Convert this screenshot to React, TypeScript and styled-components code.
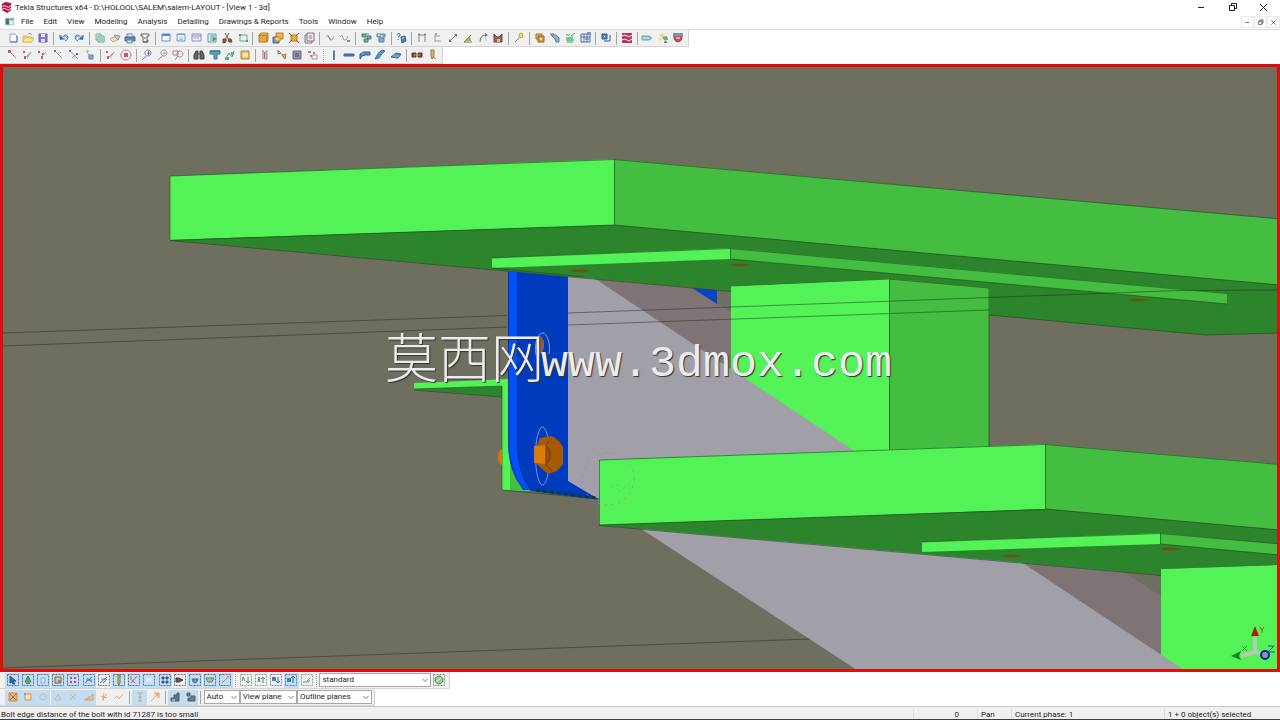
import React from 'react';
import styled, { createGlobalStyle } from 'styled-components';

const GlobalStyle = createGlobalStyle`
  *, *::before, *::after { box-sizing: border-box; }
  body { margin: 0; background: #fff; }
  button, select { font: inherit; color: inherit; margin: 0; padding: 0; border: 0; background: none; }
`;

const Window = styled.div`
  display: flex;
  flex-direction: column;
  min-height: 100vh;
  font: 8px/12px Roboto, "Open Sans", sans-serif;
  color: #1c1c1c;
  background: #fff;
  border-bottom: 1px solid #3c3c3c;
  overflow: hidden;
`;

const TitleBar = styled.header`
  display: flex;
  align-items: center;
  height: 15px;
  gap: 1px;
  padding: 0 2px 0 1px;
`;

const Title = styled.h1`
  flex: 1;
  margin: 0;
  padding-left: 2px;
  font-size: inherit;
  font-weight: 400;
  white-space: nowrap;
`;

const CaptionButton = styled.button`
  display: flex;
  align-items: center;
  justify-content: center;
  width: 30px;
  height: 14px;
`;

const MenuBar = styled.nav`
  display: flex;
  align-items: center;
  height: 15px;
  padding-left: 5px;
  border-bottom: 1px solid #dcdcdc;
`;

const MenuList = styled.ul`
  display: flex;
  flex: 1;
  gap: 10px;
  margin: 0;
  padding: 0 0 0 6px;
  list-style: none;
`;

const MenuItem = styled.button`
  display: block;
  white-space: nowrap;
`;

const ChildButton = styled.button`
  display: flex;
  align-items: center;
  justify-content: center;
  width: 13px;
  height: 12px;
  border: 1px solid #ececec;
`;

const ToolRow = styled.div`
  display: flex;
  height: 17px;
`;

const Toolbar = styled.div<{ $width: number }>`
  display: flex;
  align-items: center;
  justify-content: space-between;
  width: ${(p) => p.$width}px;
  padding: 0 2px 0 5px;
  background: #f0f0f0;
  border: 1px solid #d4d4d4;
  border-width: 0 1px 1px 0;
`;

const ToolButton = styled.button<{ $on?: boolean }>`
  display: flex;
  align-items: center;
  justify-content: center;
  width: 15px;
  height: 15px;
  background: ${(p) => (p.$on ? '#c3ddf2' : 'transparent')};

  svg { opacity: 0.85; }
`;

const Divider = styled.span<{ $dotted?: boolean }>`
  width: 1px;
  height: 13px;
  margin: 0 2px;
  border-left: 1px ${(p) => (p.$dotted ? 'dotted #b0b0b0' : 'solid #a4a4a4')};
`;

const Viewport = styled.main`
  position: relative;
  flex: 1;
  display: flex;
  min-height: 300px;
  border: 3px solid #e00d0d;
  background: #6e6f5f;
  overflow: hidden;
`;

const Scene = styled.svg`
  flex: 1;
  width: 100%;
  min-width: 0;
  display: block;
`;

const Watermark = styled.g`
  fill: #ececec;
  text-shadow: 1px 1px 1px #333;
`;

const Combo = styled.label<{ $width: number }>`
  position: relative;
  display: block;
  width: ${(p) => p.$width}px;
  height: 14px;
  border: 1px solid #a8a8a8;
  background: #fff;

  select {
    display: block;
    width: 100%;
    height: 12px;
    padding-left: 2px;
    line-height: 12px;
    appearance: none;
  }

  svg {
    position: absolute;
    top: 4px;
    right: 2px;
    pointer-events: none;
  }
`;

const StatusBar = styled.footer`
  display: grid;
  grid-template-columns: 1fr 64px 34px 153px 116px;
  height: 13px;
  padding-top: 2px;
  background: #f0f0f0;
  border-top: 1px solid #c8c8c8;
`;

const StatusCell = styled.span<{ $right?: boolean }>`
  padding: 0 ${(p) => (p.$right ? 18 : 0)}px 0 3px;
  text-align: ${(p) => (p.$right ? 'right' : 'left')};
  border-left: 1px solid #dcdcdc;
  white-space: nowrap;

  &:first-child { padding-left: 1px; border-left: 0; }
`;

/* Each icon is a list of strokes on a 12 x 12 grid: path, fill, stroke. */
type Part = [string, string, string?];

const N = 'none';
const dashBox: Part = ['M.5 .5H11.5V11.5H.5Z', N, '#3a679c'];

const icons: Record<string, Part[]> = {
  logo: [['M1 2L5 0 11 1V9L7 12 1 9Z', '#b3124a'], ['M1 5Q4 3 6 5T11 4M1 8Q4 6 6 8T11 7', N, '#fff']],
  app: [['M.5 1.5H10.5V9.5H.5Z', '#e3eef0', '#9ab0b4'], ['M1 2H5V9H1Z', '#2d7d72'], ['M6 2H10V4H6Z', '#5d93c8']],
  file: [['M3 2H8L10 4V10H3Z', '#fdfdff', '#7f9ac4'], ['M3 10H10V4', N, '#40659f']],
  open: [['M1 4H5L6 5H10V10H1Z', '#f3d35d', '#d8ad35'], ['M3 6H12L9 10H1Z', '#fbe892', '#dab544'], ['M6 2Q9 0 10 3', N, '#4faf6b']],
  save: [['M2 2H10V10H2Z', '#7163ba', '#55489a'], ['M4 2H8V5H4Z', '#eee'], ['M4 7H8V10H4Z', '#d8d4f5']],
  undo: [['M3 3V7H7M3 7Q8 0 10 5Q10 8 7 9', N, '#1d5fa6'], ['M1 3L2 8 6 7Z', '#1d5fa6'], ['M4 6Q8 2 9 6', N, '#4b87c5']],
  redo: [['M9 3V7H5M9 7Q4 0 2 5Q2 8 5 9', N, '#1d5fa6'], ['M11 3L10 8 6 7Z', '#1d5fa6'], ['M8 6Q4 2 3 6', N, '#4b87c5']],
  sheets: [['M2 2H7V8H2Z', '#d7f1e4', '#63a796'], ['M4 4H10V10H4Z', '#fff', '#2e9c74'], ['M5 6H9M5 8H9', N, '#3b78b9']],
  report: [['M1 7L7 4 10 7 4 10Z', '#f3e7a8', '#b8a04a'], ['M5 3L11 4 9 8 7 6Z', '#bec4ce', '#7f8998']],
  printer: [['M3 2H8L10 5H3Z', '#fff', '#3869a8'], ['M1 5H11V9H1Z', '#4c79b8', '#2d5389'], ['M3 8H8V11H3Z', '#f1e28c', '#53739e']],
  scroll: [['M2 2H10V4H8V10H4V4H2Z', '#fff', '#454545'], ['M4 10H9V8M5 6H7', N, '#454545']],
  window: [['M2 2H10V9H2Z', '#fff', '#4478bd'], ['M2 2H10V4H2Z', '#3c78c8']],
  window2: [['M2 2H10V9H2Z', '#e8f1fb', '#5b8cc9'], ['M2 2H10V3H2Z', '#5b8cc9'], ['M4 6H8M4 7.500H8', N, '#9db9de']],
  windows3: [['M1 2H10V9H1Z', '#f1f0fb', '#6f7ec9'], ['M1 4H10M3 6H5M6 6H8', N, '#6f7ec9']],
  props: [['M2 2H10V10H2Z', '#e6f4ee', '#3d8bb0'], ['M4 4H9M4 6H9M4 8H9', N, '#2aa155'], ['M7 5L11 7 7 9Z', '#28924a']],
  cut: [['M4 1L8 8M8 1L4 8', N, '#6e5034'], ['M2 7L5 7 5 10 2 11ZM7 7L10 7 11 10 8 10Z', '#7a4a20', '#4e2d0f']],
  area: [['M3 3H10V9H3Z', N, '#46a37e'], ['M2 2H4V4H2ZM9 8H11V10H9Z', '#2f8c6b']],
  box: [['M2 3H10V10H2Z', '#e69b1e', '#a9690a'], ['M2 3L4 1H11V8L10 10V3Z', '#f7c353', '#a9690a']],
  boxes: [['M4 1H11V7H4Z', '#f0ad36', '#a9690a'], ['M1 5H7V11H1Z', '#4c83c2', '#234f8b'], ['M3 5H8V9H3Z', '#f6c763', '#ba780f']],
  fit: [['M3 3H9V9H3Z', '#e69b1e', '#a9690a'], ['M1 1L4 4M11 11L8 8M11 1L8 4M1 11L4 8', N, '#9a2c14']],
  frame: [['M2 3H9V11H2Z', '#f8dca0', '#6062a0'], ['M4 1H11V9H4Z', '#e3e2f3', '#6062a0'], ['M6 3H9V7H6Z', '#e6a943']],
  wave: [['M2 5L4 3 6 8 8 8 10 4', N, '#9b9b9b'], ['M4 4L7 8', N, '#6c6c6c']],
  wave2: [['M1 5L3 3 5 8 7 8 9 4', N, '#9b9b9b'], ['M8 8H11V10H8Z', '#777']],
  nodes: [['M2 2H6V5H2ZM7 4H11V7H7ZM4 7H8V10H4Z', '#57a48c', '#28705c'], ['M6 2H9', N, '#3579bc']],
  nodes2: [['M2 2H10V5H2ZM4 6H9V10H4Z', '#71a8ac', '#397a9a'], ['M3 3H5M6 4H8', N, '#f1faef']],
  help: [['M2 3Q3 0 5 2Q6 4 3 5M3 7V8', N, '#1f5fa8'], ['M6 5L10 4 11 9 7 11Z', '#326fae', '#1a4779'], ['M7 6H9', N, '#d7e7f7']],
  dimV: [['M3 2V10M9 2V10M3 3H9', N, '#707070'], ['M2 3L3 1 4 3ZM8 3L9 1 10 3Z', '#555']],
  dimH: [['M4 2V10M4 9H10M4 4H9', N, '#8c8c8c'], ['M4 2H6', N, '#555']],
  diag: [['M3 9L9 3', N, '#707070'], ['M2 7V10H5ZM7 2H10V5Z', '#555']],
  angle: [['M2 10L9 3M2 10H10', N, '#6d6a1d'], ['M4 9L8 4 9 9Z', '#9a9b45']],
  arc: [['M3 10Q3 3 9 3', N, '#5a5a78'], ['M8 1L11 3 8 5Z', '#5a5a78'], ['M9 5V9', N, '#b4b4cd']],
  dimBox: [['M2 2V10H10V2L7 5 5 5Z', '#844f3f', '#4d2922'], ['M5 7H8V10H5Z', '#e5a877']],
  wand: [['M2 10L8 4', N, '#3b6fae'], ['M6 2L9 1 10 5 7 6Z', '#f1df52', '#b7a42a']],
  copy: [['M2 2H8V7H2Z', '#efb13e', '#99600e'], ['M4 4H10V10H4Z', '#cf922c', '#7a4d11'], ['M6 6H8V8H6Z', '#f7dfae']],
  move: [['M2 3L7 3 10 6 10 10 7 10 6 7Z', '#7ba4ce', '#386a9f'], ['M1 2H5', N, '#456']],
  check: [['M2 3H6M7 4L11 1', N, '#2ba64b'], ['M3 6L9 5M2 8H10M3 10H9', N, '#279a47'], ['M2 5H9V9H3Z', '#5cc177']],
  grid: [['M1 2H10V10H1Z', '#eef3fb', '#34588f'], ['M1 5H10M4 2V10M7 2V10M5 7H9', N, '#34588f'], ['M7 0H11V3H7Z', '#5a85c6']],
  panel: [['M2 2H7V7H2Z', '#3c75c0', '#1a3e76'], ['M4 9H10V3', N, '#1f3d68'], ['M4 4H5V5H4Z', '#fff']],
  tekla: [['M1 1H11V11H1Z', '#b3124a'], ['M1 4Q4 2 6 4T11 3M1 8Q4 6 6 8T11 7', N, '#fff']],
  tag: [['M1 4H8L11 6 8 8H1Z', '#7bc0c5', '#559da4'], ['M3 5V7M5 5V7M7 5V7', N, '#d5eff0']],
  recycle: [['M2 5L5 1 8 4Z', '#f0d347'], ['M5 5L10 4 11 8 7 8Z', '#49a95e'], ['M8 8L11 11H7Z', '#2b72bd'], ['M1 6L5 7 4 9Z', '#f0d347']],
  shield: [['M2 3H10V6Q9 10 6 10Q3 10 2 6Z', '#c03449', '#7c2a3d'], ['M1 1H11V4H1Z', '#6a7fb4'], ['M4 6H8', N, '#fff']],
  snap1: [['M3 3L9 9', N, '#767676'], ['M1 1H4V4H1Z', '#cf3e48']],
  snap2: [['M3 9L9 3M5 9L9 3', N, '#909090'], ['M1 2H3V4H1ZM2 7H4V10H2Z', '#cf3e48']],
  snap3: [['M4 8L9 3', N, '#8a8a8a'], ['M1 2H3V4H1ZM4 7H6V10H4ZM5 4H7V6H5Z', '#c0434c']],
  snap4: [['M2 2L9 9M8 3L7 4', N, '#8d8d8d'], ['M1 1H3V3H1Z', '#7e4b75']],
  snap5: [['M2 2L6 6 10 10M10 4L4 9', N, '#7d8fb1'], ['M1 1H3V3H1ZM8 4H10V6H8Z', '#46639d']],
  snap6: [['M2 2H5M3 3L5 6', N, '#8d8d8d'], ['M5 6H9V10H5Z', '#6f9cc9', '#3f6a9b']],
  ring: [['M6 1A5 5 0 1 1 5.900 1', N, '#a3656b'], ['M4 4H8V8H4Z', '#d13540']],
  zoomIn: [['M7 1A3 3 0 1 1 6.900 1M5 7L1 11', N, '#566ca0'], ['M6 4H9M7.500 2V6', N, '#566ca0']],
  zoomOut: [['M7 1A3 3 0 1 1 6.900 1M5 7L1 11', N, '#8c7c96'], ['M6 4H9', N, '#8c7c96']],
  zoomBox: [['M1 2H6V6H1Z', N, '#b4666a'], ['M8 2A3 3 0 1 1 7.900 2M6 7L3 11', N, '#8b7d8e']],
  binoc: [['M1 10V6L3 2H5V10ZM7 10V2H9L11 6V10Z', '#4b4b54', '#26262c'], ['M5 5H7', N, '#26262c']],
  beamT: [['M1 2H11V5H8V10H5V5H1Z', '#37a0bc', '#1b5f8f'], ['M1 2H11', N, '#1f4e8d']],
  weld: [['M2 9L5 4 8 8 10 2', N, '#2e79bf'], ['M1 8H5V11H1ZM7 3H10V6H7Z', '#43a763']],
  plate: [['M2 2H10V10H2Z', '#e7bd53', '#9a7b2d'], ['M4 4H9V8H4Z', '#f7e09c']],
  posts: [['M3 1V10M6 2V11', N, '#c44e57'], ['M4 3H5V10H4Z', '#777'], ['M7 1V10', N, '#999']],
  axe: [['M3 2L9 10', N, '#63848f'], ['M2 1L5 4 2 5ZM6 6L10 5 9 10Z', '#dcab35', '#86722c']],
  cube: [['M2 2H10V10H2Z', '#8c7ca3', '#5e5174'], ['M4 4H8V8H4Z', '#5e5481']],
  scatter: [['M1 2H4V4H1ZM6 3H8V5H6ZM3 6H5V8H3Z', '#c5656b'], ['M5 6H10V10H5Z', '#efeff4', '#8c8da3']],
  col: [['M6 1V10', N, '#2d6caf'], ['M5 2H7V11H5Z', '#2e6fb6']],
  beam: [['M1 5H11V7H1Z', '#2f6cac', '#1b4b84']],
  poly: [['M1 10V5L4 3H11V6H6L3 7Z', '#3c7abd', '#1b4b84'], ['M2 4H5', N, '#78a7d5']],
  curve: [['M1 10L5 9Q7 5 11 2L8 1Q4 3 1 10Z', '#3c85c9', '#245f9c']],
  slab: [['M1 8L6 4 11 5 8 9Z', '#3c78ae', '#264f7b'], ['M3 7H9', N, '#8fb4d8']],
  bolts: [['M1 4H5V8H1ZM7 4H11V8H7Z', '#7a2c17', '#3c170c'], ['M3 6H9', N, '#de8a31']],
  pen: [['M5 1H8V7L6 10 5 7Z', '#e2b23a', '#87662a'], ['M7 8L10 10', N, '#76786f']],
  selArrow: [dashBox, ['M3 2L9 7 6 7 8 10 6 10 5 8 3 9Z', '#1559a8', '#0d3b76']],
  selTree: [dashBox, ['M6 2L9 8H3Z', '#3eab4b', '#1f7931'], ['M4 9H8V10H4Z', '#1f7931']],
  selDim: [dashBox, ['M4 4H8V9H4Z', '#d7e6f5', '#85add3']],
  selPart: [dashBox, ['M3 3H9V9H3Z', '#dcc283', '#64573b'], ['M6 6H9V9H6Z', '#8d744c']],
  selGrid: [dashBox, ['M3 3H5V5H3ZM7 3H9V5H7ZM3 7H5V9H3ZM7 7H9V9H7Z', '#c33455']],
  selCross: [dashBox, ['M2 9L9 3M4 4L9 8M3 6H9', N, '#386cad']],
  selHatch: [dashBox, ['M2 9L9 3M5 9L9 5M3 5H8', N, '#4d6180']],
  selBolt: [dashBox, ['M5 1H7V9L6 11 5 9Z', '#e3bd38', '#765b1e']],
  selWeld: [dashBox, ['M3 9L9 2M3 5L7 9', N, '#bd4863'], ['M2 2H4V6H2Z', '#e087a0']],
  selRect: [dashBox, ['M3 4H9V8H3Z', '#dceefa']],
  selFour: [dashBox, ['M3 3H5V5H3ZM7 3H9V5H7ZM3 7H5V9H3ZM7 7H9V9H7Z', '#23427a', '#23427a']],
  selBeam: [dashBox, ['M2 4H5L9 6 5 8H2Z', '#6b3827', '#31170f']],
  selCup: [dashBox, ['M3 5H9Q8 9 6 9T3 5Z', '#6d86a5', '#374f70']],
  selPlane: [dashBox, ['M2 4H10L8 8H4Z', '#9eb98c', '#507668'], ['M4 6H8', N, '#e1b54b']],
  selRod: [dashBox, ['M3 9L9 3', N, '#b18448'], ['M7 2L10 2 10 5Z', '#c9974f']],
  up1: [['M.5 .5H11.5V11.5H.5Z', N, '#77a383'], ['M3 3L5 7M3 3L2 7M8 3V9M6 7L8 9 10 7', N, '#368b4d']],
  up2: [['M.5 .5H11.5V11.5H.5Z', N, '#77a383'], ['M3 8L4 3 5 8M8 9V3M6 5L8 3 10 5', N, '#2e7466']],
  up3: [['M.5 .5H11.5V11.5H.5Z', N, '#5b83b4'], ['M2 3H6V7H2Z', '#3a68a7'], ['M8 3V9M6 7L8 9 10 7', N, '#264f89']],
  up4: [['M.5 .5H11.5V11.5H.5Z', N, '#4276b4'], ['M2 4H6V8H2Z', '#3a68a7'], ['M8 9V2M6 4L8 2 10 4', N, '#1e4b8e']],
  up5: [['M.5 .5H11.5V11.5H.5Z', N, '#77a383'], ['M2 8H8V6M6 7L9 4', N, '#568771']],
  filter: [['M.5 .5H11.5V11.5H.5Z', N, '#58935d'], ['M6 2A4 4 0 1 1 5.900 2', '#8cc08c', '#30813d'], ['M4 7L8 4', N, '#fff']],
  oFull: [['M2 2H10V10H2Z', '#f1ad5d', '#ca7d2b'], ['M3 3L9 9M9 3L3 9', N, '#b15e13']],
  oBox: [['M3 3H9V9H3Z', '#fbe0be', '#d78b39'], ['M2 2H4V4H2Z', '#d78b39']],
  oRing: [['M6 3A3 3 0 1 1 5.900 3', N, '#bcb3a4']],
  oTri: [['M6 3L9 9H3Z', N, '#c4b6a0']],
  oX: [['M3 3L9 9M9 3L3 9', N, '#dda975']],
  oStep: [['M2 9H10V3L7 6H5V8H2Z', '#efbe86', '#dd9b54']],
  oStar: [['M3 5L9 7M6 2L5 10M9 3L4 8', N, '#e09a63']],
  oTick: [['M1 8L4 5 6 8 10 3', N, '#e1a06b']],
  oT: [['M3 2H9M6 2V10M4 10H8M4 6H8', N, '#a7a48e']],
  oArrow: [['M2 10L9 3M5 2H10V7', N, '#e69455'], ['M5 2H10V7Z', '#eba267']],
  stepA: [['M2 10V7H5V4H8V2H10V10Z', '#56616d', '#39424d'], ['M3 8H6V10H3Z', '#9ba8b5']],
  stepB: [['M2 2H5V5H2ZM3 10V7H6V5H10V10Z', '#5d6974', '#3f4b57']],
};

const Icon = ({ name, size = 12 }: { name: string; size?: number }) => (
  <svg width={size} height={size} viewBox="0 0 12 12" aria-hidden="true">
    {icons[name].map(([d, fill, stroke], i) => (
      <path key={i} d={d} fill={fill} stroke={stroke} strokeDasharray={d.startsWith('M.5 .5') ? '2 1' : undefined} />
    ))}
  </svg>
);

/* "|" is a divider, ":" a dotted grip, a leading "*" marks a pressed button. */
const Tools = ({ items }: { items: string }) => (
  <>
    {items.split(' ').map((item, i) => {
      if (item === '|' || item === ':') return <Divider key={i} $dotted={item === ':'} />;
      const on = item.startsWith('*');
      const name = on ? item.slice(1) : item;
      return (
        <ToolButton key={i} $on={on} aria-label={name} aria-pressed={on}>
          <Icon name={name} />
        </ToolButton>
      );
    })}
  </>
);

const Select = ({ label, value, width }: { label: string; value: string; width: number }) => (
  <Combo $width={width}>
    <select aria-label={label} defaultValue={value}>
      <option>{value}</option>
    </select>
    <svg width="6" height="5" viewBox="0 0 6 5" aria-hidden="true">
      <path d="M.5 1L3 3.500 5.500 1" fill="none" stroke="#777" />
    </svg>
  </Combo>
);

const LIGHT = '#53f358';
const MID = '#44be40';
const DARK = '#2c842c';
const STEEL = '#a19fa8';
const SHADE = '#7e7476';

const Edge = ({ d }: { d: string }) => <path d={d} fill="none" stroke="#1d4a1c" strokeWidth="1" opacity="0.6" />;

const Washer = ({ x, y }: { x: number; y: number }) => (
  <g>
    <ellipse cx={x} cy={y} rx="10" ry="1.500" fill="#5f5a16" />
    <path d={`M${x - 6} ${y}H${x + 5}`} stroke="#84421a" opacity="0.8" />
  </g>
);

const Model = () => (
  <Scene viewBox="3 67 1274 602" preserveAspectRatio="xMidYMid slice" role="img" aria-label="3D model view">
    <path d="M590 276H676L1277 673H1187Z" fill={SHADE} />
    <path d="M692 288L717 290V304Z" fill="#0a45c4" />

    <path d="M731 286L889 279V455H731Z" fill={LIGHT} />
    <path d="M889 279L989 288V455H889Z" fill={MID} />
    <Edge d="M889.500 279V450M731 286L889 279 989 288V447" />
    <path d="M1161 569L1280 565V672H1161Z" fill={LIGHT} />
    <path d="M568 274H588L1187 672H860L568 481Z" fill={STEEL} />

    <path d="M170 176L614 159V225L170 240Z" fill={LIGHT} />
    <path d="M614 159L1280 219V285L614 225Z" fill={MID} />
    <path d="M170 240L614 225 1280 285V333L1206 335 989 315V288L889 279 731 286V291Z" fill={DARK} />
    <Edge d="M170 240V176L614 159.500 1280 219M614.500 159V225M170 240.500L614 225 1280 285M170 240.500L731 291.500M989 315L1206 335 1280 333" />
    <path d="M492 258L730 248V259L492 268Z" fill={LIGHT} />
    <path d="M730 248L1227 293V304L730 259Z" fill={MID} />
    <Edge d="M492 258L730 248.500 1227 293.500M730.500 248V259L1227 304M492 268L585 277" />
    <Washer x={580} y={271} />
    <Washer x={740} y={265} />
    <Washer x={1138} y={300} />

    <path d="M414 389L502 385V397Z" fill={DARK} />
    <path d="M414 383L509 379V386L414 389Z" fill={LIGHT} />
    <path d="M502 380H509V440L528 491 502 490Z" fill={LIGHT} />
    <path d="M510 450V490L530 491Z" fill={MID} />
    <Edge d="M414 389L502 386V490M414 390L502 397M502 490L600 499" />
    <path d="M498 457Q498 450 502 449V465Q498 464 498 457Z" fill="#c97a0a" />
    <path d="M508 271L518 272V450L531 490 524 490Q508 472 508 442Z" fill="#0050fb" />
    <path d="M517 272L568 277V481L600 500 531 491Q517 474 517 440Z" fill="#003bbe" />
    <path d="M508.500 272V442Q509 472 524 490M517.500 272V442Q518 472 531 490" fill="none" stroke="#043196" />
    <path d="M536 490L597 498" stroke="#0e3a2c" strokeWidth="3" strokeDasharray="4 3" />
    <path d="M536 355C534 340 539 333 543 333S551 345 549 354" fill="none" stroke="#8ca5cf" />
    <ellipse cx="540" cy="345" rx="4" ry="9" fill="#92604d" />
    <ellipse cx="542.500" cy="456" rx="7" ry="29" fill="none" stroke="#6f97de" />
    <path d="M540 438L552 436 559 441 563 447V464L557 471 548 474 541 468 537 464V446Z" fill="#a75a06" />
    <path d="M534 446L546 445V464L534 463Z" fill="#d77c08" />
    <path d="M546 445L552 439M546 464L552 471M546 445V464L550 459V450Z" fill="#9a5208" stroke="#733d0b" />

    <path d="M599 460L1045 444V509L599 525Z" fill={LIGHT} />
    <path d="M1045 444L1280 464V530L1045 509Z" fill={MID} />
    <path d="M599 525L1045 509 1280 530V565L1161 569V575Z" fill={DARK} />
    <Edge d="M599.500 525V460L1045 444.500 1280 464.500M1045.500 444V509L1280 530M599 525L1045 509.500M599 525.500L1161 575.500" />
    <path d="M922 542L1160 533V544L922 552Z" fill={LIGHT} />
    <path d="M1160 533L1280 544V555L1160 544Z" fill={MID} />
    <Edge d="M922 542L1160 533.500 1280 544M1160.500 533V544L1280 555" />
    <Washer x={1011} y={556} />
    <Washer x={1170} y={549} />

    <path d="M3 333L507 315.500M568 313L1180 290.500 1280 290M3 346L507 327M568 325L989 310M3 668L810 639" fill="none" stroke="#262e22" strokeWidth="1" opacity="0.5" />
    <circle cx="608" cy="479" r="26" fill="none" stroke="#d168c0" strokeDasharray="2 5" opacity="0.8" />
    <path d="M618 492L630 484M610 487L620 484" stroke="#36d9b0" strokeDasharray="3 3" />

    <path d="M1255 637V652L1241 656M1255 652L1265 655" fill="none" stroke="#b5c9b5" strokeWidth="4" />
    <path d="M1251 636L1255 626 1259 636Z" fill="#b01d08" />
    <path d="M1231 656L1241 651 1239 656 1241 660Z" fill="#128a1c" />
    <circle cx="1265" cy="655" r="4" fill="#8a98a8" stroke="#10268e" strokeWidth="2" />
    <path d="M1260 627L1262 630 1264 627M1262 630V633" fill="none" stroke="#a8551c" />
    <path d="M1242 646L1247 651M1247 646L1242 651" stroke="#2fae38" />
    <path d="M1268 646H1274L1268 652H1275" fill="none" stroke="#1d4f9a" />

    <Watermark>
      <text x="385" y="378" fontSize="53" fontFamily='"Noto Sans CJK SC", sans-serif' fontWeight="300">莫西网</text>
      <text x="541" y="376" fontSize="45" fontFamily='"Liberation Mono", monospace'>www.3dmox.com</text>
    </Watermark>
  </Scene>
);

const menus = ['File', 'Edit', 'View', 'Modeling', 'Analysis', 'Detailing', 'Drawings & Reports', 'Tools', 'Window', 'Help'];

const glyphs: Record<string, string> = {
  Minimize: 'M2 5.500H8',
  Restore: 'M2.500 3.500H7.500V8.500H2.500ZM4.500 3.500V1.500H9.500V6.500H7.500',
  Close: 'M2 2L9 9M9 2L2 9',
};

const Glyph = ({ name, size }: { name: string; size: number }) => (
  <svg width={size} height={size} viewBox="0 0 11 11" aria-hidden="true">
    <path d={glyphs[name]} fill="none" stroke="#222" />
  </svg>
);

export default function App() {
  return (
    <Window>
      <GlobalStyle />
      <TitleBar>
        <Icon name="logo" size={11} />
        <Title>Tekla Structures x64 - D:\HOLOOL\SALEM\salem-LAYOUT - [View 1 - 3d]</Title>
        {Object.keys(glyphs).map((g) => (
          <CaptionButton key={g} aria-label={g}><Glyph name={g} size={11} /></CaptionButton>
        ))}
      </TitleBar>
      <MenuBar>
        <Icon name="app" size={10} />
        <MenuList>
          {menus.map((m) => <li key={m}><MenuItem>{m}</MenuItem></li>)}
        </MenuList>
        {Object.keys(glyphs).map((g) => (
          <ChildButton key={g} aria-label={`${g} view`}><Glyph name={g} size={7} /></ChildButton>
        ))}
      </MenuBar>
      <ToolRow>
        <Toolbar $width={689}>
          <Tools items="file open save | undo redo | sheets report printer scroll | window window2 windows3 props cut area | box boxes fit frame | wave wave2 | nodes nodes2 | help | dimV dimH diag angle arc dimBox | wand | copy move check grid | panel | tekla | tag recycle shield" />
        </Toolbar>
      </ToolRow>
      <ToolRow>
        <Toolbar $width={443}>
          <Tools items="snap1 snap2 snap3 snap4 snap5 snap6 | snap2 ring | zoomIn zoomOut zoomBox | binoc beamT weld plate | posts axe cube scatter : col beam poly curve slab | bolts pen" />
        </Toolbar>
      </ToolRow>
      <Viewport>
        <Model />
      </Viewport>
      <ToolRow>
        <Toolbar $width={450}>
          <Tools items="*selArrow *selTree *selDim *selPart *selGrid *selCross selHatch *selBolt *selWeld *selRect *selFour selBeam *selCup *selPlane *selRod : up1 up2 up3 *up4 up5 :" />
          <Select label="Selection filter" value="standard" width={112} />
          <Tools items="filter" />
        </Toolbar>
      </ToolRow>
      <ToolRow>
        <Toolbar $width={375}>
          <Tools items="*oFull *oBox *oRing *oTri *oX *oStep oStar oTick | *oT oArrow | *stepA *stepB |" />
          <Select label="Snap depth" value="Auto" width={36} />
          <Select label="Plane" value="View plane" width={57} />
          <Select label="Planes" value="Outline planes" width={75} />
        </Toolbar>
      </ToolRow>
      <StatusBar>
        <StatusCell>Bolt edge distance of the bolt with id 71287 is too small</StatusCell>
        <StatusCell $right>0</StatusCell>
        <StatusCell>Pan</StatusCell>
        <StatusCell>Current phase: 1</StatusCell>
        <StatusCell>1 + 0 object(s) selected</StatusCell>
      </StatusBar>
    </Window>
  );
}
